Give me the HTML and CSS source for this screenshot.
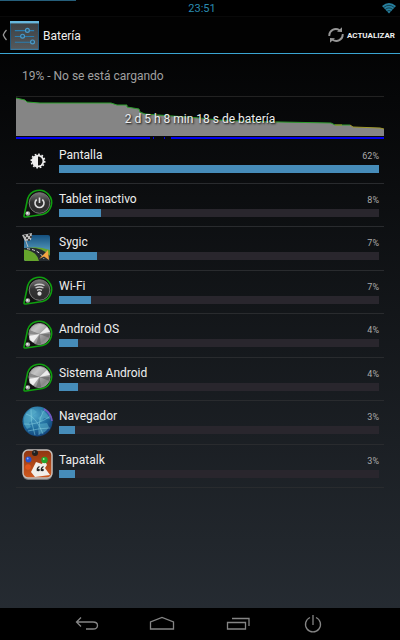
FILE: index.html
```html
<!DOCTYPE html>
<html lang="es">
<head>
<meta charset="utf-8">
<title>Batería</title>
<meta name="viewport" content="width=device-width, initial-scale=1">
<link rel="stylesheet" href="styles.css">
</head>
<body>
<svg class="defs" aria-hidden="true">
  <defs>
    <linearGradient id="dark" x1="0" y1="0" x2="0" y2="1"><stop offset="0" stop-color="#777"/><stop offset=".45" stop-color="#333"/><stop offset="1" stop-color="#2b2b2b"/></linearGradient>
    <linearGradient id="metal" x1="0" y1="0" x2="1" y2="1"><stop offset="0" stop-color="#999"/><stop offset=".3" stop-color="#c4c4c4"/><stop offset=".5" stop-color="#aaa"/><stop offset=".75" stop-color="#888"/><stop offset="1" stop-color="#b5b5b5"/></linearGradient>
    <linearGradient id="sky" x1="0" y1="0" x2="0" y2="1"><stop offset="0" stop-color="#14507f"/><stop offset="1" stop-color="#7cc4e0"/></linearGradient>
    <radialGradient id="globe" cx=".4" cy=".3" r=".75"><stop offset="0" stop-color="#4fa5c8"/><stop offset=".6" stop-color="#1f6c9d"/><stop offset="1" stop-color="#123d75"/></radialGradient>
    <linearGradient id="wood" x1="0" y1="0" x2="0" y2="1"><stop offset="0" stop-color="#8e3510"/><stop offset="1" stop-color="#d05a20"/></linearGradient>
    <linearGradient id="tile" x1="0" y1="0" x2="0" y2="1"><stop offset="0" stop-color="#3b3f42"/><stop offset="1" stop-color="#55595c"/></linearGradient>
    <g id="drop">
      <path d="M2 28L5.700 10.500A12.300 12.300 0 1 1 20.500 26.500L4 29Q1.800 29.300 2 28Z" fill="#111" stroke="#10a010" stroke-width="1.600"/>
      <circle cx="5.800" cy="25.500" r="2.300" fill="#aaa"/><circle cx="5.300" cy="25" r="1" fill="#eee"/>
    </g>
    <g id="disc">
      <circle cx="17.500" cy="15" r="10.500" fill="url(#metal)" stroke="#999"/>
      <path d="M17.500 15L7.500 17V21L11 23.500ZM17.500 15L25 8L28 13Z" fill="#fff" opacity=".8"/>
      <path d="M17.500 15L7.500 11L7.300 15.500ZM17.500 15L27.500 19L27.700 15ZM17.500 15L14 25L19 25.300Z" fill="#555" opacity=".5"/>
    </g>
  </defs>
</svg>

<header class="status">
  <span class="clock">23:51</span>
  <svg class="signal" viewBox="0 0 14 11" aria-hidden="true"><path d="M0 3Q7-3 14 3L7 10.500Z" fill="#27809f"/><path d="M1.500 4.600Q7 0 12.500 4.600M3.200 6.500Q7 3.300 10.800 6.500M5 8.300Q7 6.600 9 8.300" fill="none" stroke="#000" stroke-width=".5"/></svg>
</header>

<nav class="bar">
  <a class="up" href="#" aria-label="Volver a Ajustes">
    <svg class="chevron" viewBox="0 0 6 12" aria-hidden="true"><path d="M4.500 1Q2.500 3 1.300 6Q2.500 9 4.500 11" fill="none" stroke="#999" stroke-width="1.300"/></svg>
    <svg class="settings" viewBox="0 0 30 30" aria-hidden="true">
      <rect x=".5" y=".5" width="29" height="29" fill="url(#tile)" stroke="#235b80"/>
      <path d="M0 0H30V2.500H0Z" fill="#67b7dd"/><path d="M1 29.300H29" stroke="#3d81aa"/>
      <path d="M5 10H25M5 16H25M5 22H25" stroke="#2a7db0" stroke-width="1.200"/>
      <g fill="#2d546c" stroke="#4a9ccc" stroke-width="1.200"><circle cx="18" cy="9.700" r="2"/><circle cx="13" cy="15.700" r="2"/><circle cx="23.300" cy="21.700" r="2"/></g>
    </svg>
  </a>
  <h1>Batería</h1>
  <button class="refresh" type="button">
    <svg viewBox="0 0 16 16" aria-hidden="true"><g fill="none" stroke="#969696" stroke-width="1.900"><path d="M1.300 9A6.500 6.500 0 0 1 11.500 3.200"/><path d="M14.700 7A6.500 6.500 0 0 1 4.500 12.800"/></g><path d="M9 4.800L14 5V.300ZM7 11.200L2 11V15.700Z" fill="#969696"/></svg>
    ACTUALIZAR
  </button>
</nav>

<main>
  <p class="state">19% - No se está cargando</p>
  <section class="history">
    <svg viewBox="0 0 368 43" preserveAspectRatio="none" aria-hidden="true">
      <path d="M0 1L9 3L11 5L24 6L95 6L101 8H111V10L123 12L124 15L129 17L184 21L202 23L224 24L264 25L315 26L319 28L334 28L337 30L364 31L368 32V39H0Z" fill="#858585"/>
      <path d="M0 1L9 3L11 5L24 6L95 6L101 8H111V10L123 12L124 15L129 17L184 21L202 23L224 24L264 25L315 26L319 28H334" fill="none" stroke="#2c9e2c"/>
      <path d="M334 28L337 30L364 31L368 32M319 28H326" fill="none" stroke="#a09a28"/>
      <path d="M0 41H134M137 41H138M148 41H149M155 41H368" stroke="#0000f0" stroke-width="2"/>
    </svg>
    <p>2 d 5 h 8 min 18 s de batería</p>
  </section>

  <ul class="usage">
    <li>
      <svg class="icon" viewBox="0 0 32 32" aria-hidden="true"><circle cx="16" cy="16" r="6.300" fill="#eee"/><circle cx="16" cy="16" r="6.700" fill="none" stroke="#eee" stroke-width="1.600" stroke-dasharray="1.750 1.750"/><path d="M16 11.500A4.500 4.500 0 0 1 16 20.500Z" fill="#111"/></svg>
      <span class="name">Pantalla</span><span class="pct">62%</span><div class="track"><div class="fill" style="width:100%"></div></div>
    </li>
    <li>
      <svg class="icon" viewBox="0 0 32 32" aria-hidden="true"><use href="#drop"/><circle cx="17.500" cy="15" r="10.300" fill="url(#dark)" stroke="#777"/><path d="M14.700 11.500A4.500 4.500 0 1 0 20.300 11.500M17.500 9.500V15" fill="none" stroke="#ddd" stroke-width="1.600"/></svg>
      <span class="name">Tablet inactivo</span><span class="pct">8%</span><div class="track"><div class="fill" style="width:13%"></div></div>
    </li>
    <li>
      <svg class="icon" viewBox="0 0 32 32" aria-hidden="true"><rect x="2" y="3" width="26" height="26" rx="2" fill="url(#sky)"/><path d="M2 17Q14 13 28 18V27Q28 29 26 29H4Q2 29 2 27Z" fill="#65a52c"/><path d="M2 16Q20 14 28 24V29H17Q15 19 2 17.500Z" fill="#252b30"/><path d="M5 16.700Q18 18 22 27" fill="none" stroke="#ddd" stroke-dasharray="3 2"/><path d="M17 27L26 18L27 28L22 24.500Z" fill="#f4a443"/><path d="M0 3L10 1L9 8L3 9Z" fill="#bbb"/><path d="M2 3H4V5H2ZM6 2H8V4H6ZM4 5H6V7H4ZM8 4H10V6H8ZM6 7H8V9H6Z" fill="#444"/><path d="M2 4L6 15" stroke="#bbb"/></svg>
      <span class="name">Sygic</span><span class="pct">7%</span><div class="track"><div class="fill" style="width:12%"></div></div>
    </li>
    <li>
      <svg class="icon" viewBox="0 0 32 32" aria-hidden="true"><use href="#drop"/><circle cx="17.500" cy="15" r="10.300" fill="url(#dark)" stroke="#777"/><path d="M12.500 10.500Q17.500 8 22.500 10.500M13.500 13Q17.500 11 21.500 13M15 15.300Q17.500 14 20 15.300" fill="none" stroke="#ccc" stroke-width="1.300"/><circle cx="17.500" cy="18.700" r="2.100" fill="#ddd"/></svg>
      <span class="name">Wi-Fi</span><span class="pct">7%</span><div class="track"><div class="fill" style="width:10%"></div></div>
    </li>
    <li>
      <svg class="icon" viewBox="0 0 32 32" aria-hidden="true"><use href="#drop"/><use href="#disc"/></svg>
      <span class="name">Android OS</span><span class="pct">4%</span><div class="track"><div class="fill" style="width:6%"></div></div>
    </li>
    <li>
      <svg class="icon" viewBox="0 0 32 32" aria-hidden="true"><use href="#drop"/><use href="#disc"/></svg>
      <span class="name">Sistema Android</span><span class="pct">4%</span><div class="track"><div class="fill" style="width:6%"></div></div>
    </li>
    <li>
      <svg class="icon" viewBox="0 0 32 32" aria-hidden="true"><circle cx="15.500" cy="15.500" r="15" fill="url(#globe)"/><path d="M2 12Q4 5 11 3L15 6L11 9L12 13L7 17L9 21L5 23Q1 18 2 12ZM19 4Q25 6 28 13L22 12L19 16L16 12L20 9ZM17 18L25 17L27 21Q23 28 17 28L18 23Z" fill="#5bb2cc" opacity=".55"/><path d="M4 8Q14 10 21 28M9 3Q8 15 13 29M2 18Q14 20 29 10M6 25Q18 22 28 22M24 3Q16 9 17 29" fill="none" stroke="#8bd5e4" stroke-width=".7" opacity=".7"/><path d="M22 3Q29 7 30 15" fill="none" stroke="#7657c0" stroke-width="1.700"/></svg>
      <span class="name">Navegador</span><span class="pct">3%</span><div class="track"><div class="fill" style="width:5%"></div></div>
    </li>
    <li>
      <svg class="icon" viewBox="0 0 32 32" aria-hidden="true"><rect x="1" y="1" width="29" height="30" rx="5" fill="#777"/><rect x="1" y="1" width="29" height="28" rx="5" fill="url(#wood)" stroke="#c5bfba" stroke-width="1.500"/><path d="M14 13L20 15L22 10L25 16L23 19L28 26L13 28L9 23Z" fill="#f2efea"/><g fill="none" stroke="#222" stroke-width="1.300"><path d="M17.500 17.500Q14.500 19 15.500 22M21.500 17.500Q18.500 19 19.500 22"/></g><circle cx="16.500" cy="21" r="1.300" fill="#222"/><circle cx="20.500" cy="21" r="1.300" fill="#222"/><circle cx="13" cy="4" r="3" fill="#222"/><circle cx="12.300" cy="3" r=".8" fill="#888"/><circle cx="6.500" cy="10.500" r="3" fill="#2452cf"/><circle cx="5.700" cy="9.500" r=".9" fill="#8db0ff"/><circle cx="22.500" cy="11" r="3.200" fill="#26a62c"/><circle cx="21.700" cy="10" r=".9" fill="#9cf09c"/><circle cx="6" cy="18" r="2.800" fill="#e0551e"/></svg>
      <span class="name">Tapatalk</span><span class="pct">3%</span><div class="track"><div class="fill" style="width:5%"></div></div>
    </li>
  </ul>
</main>

<footer class="keys">
  <button type="button" aria-label="Atrás"><svg viewBox="0 0 26 18"><path d="M7 2.500L2.500 7L7 11.500M2.500 7H19Q23.500 7 23.500 10.500Q23.500 14 19 14H12" /></svg></button>
  <button type="button" aria-label="Inicio"><svg viewBox="0 0 26 18"><path d="M1.500 14V7L13 2.500L24.500 7V14Z"/></svg></button>
  <button type="button" aria-label="Recientes"><svg viewBox="0 0 26 18"><path d="M2.500 7.500H20.500V14H2.500ZM7 3.500H24V11"/></svg></button>
  <button type="button" aria-label="Apagar"><svg viewBox="0 0 26 18"><path d="M10 2.500A7.500 7.500 0 1 0 16 2.500M13 0V10"/></svg></button>
</footer>
</body>
</html>
```

FILE: styles.css
```css
* {
  box-sizing: border-box;
}

body {
  margin: 0;
  min-height: 100vh;
  display: flex;
  flex-direction: column;
  font-family: Roboto, "Liberation Sans", sans-serif;
  color: #eee;
  background: linear-gradient(#000, #272d34);
}

h1, p, ul {
  margin: 0;
  padding: 0;
  font-weight: 400;
}

svg {
  display: block;
}

button {
  padding: 0;
  border: 0;
  background: none;
  color: inherit;
  font-family: inherit;
}

.defs {
  position: absolute;
  width: 0;
  height: 0;
}

.status {
  display: grid;
  grid-template-columns: 1fr auto 1fr;
  align-items: end;
  height: 17px;
  padding: 0 4px 0 8px;
  background: linear-gradient(90deg, #255e7a, #255e7a) 0 0 / 19% 1px no-repeat #000;
  border-bottom: 1px solid #090909;
}

.clock {
  grid-column: 2;
  font-size: 11px;
  line-height: 14px;
  color: #2a8bb0;
}

.signal {
  justify-self: end;
  align-self: center;
  width: 14px;
  height: 11px;
}

.bar {
  display: flex;
  align-items: center;
  height: 37px;
  padding: 0 5px 0 2px;
  background: #020202;
  border-bottom: 1px solid #3aa5d2;
}

.up {
  display: flex;
  align-items: center;
  gap: 2px;
}

.chevron {
  width: 6px;
  height: 12px;
}

.settings {
  width: 29px;
  height: 29px;
}

h1 {
  flex: 1;
  margin-left: 4px;
  font-size: 12px;
  line-height: 18px;
  padding-top: 1px;
}

.refresh {
  display: flex;
  align-items: center;
  gap: 3px;
  font-size: 8px;
  font-weight: 700;
}

.refresh svg {
  width: 16px;
  height: 16px;
}

main {
  flex: 1;
  padding: 0 16px;
}

.state {
  padding: 2px 6px 0;
  font-size: 12px;
  line-height: 40px;
  color: #a0a0a0;
  border-bottom: 1px solid #222;
}

.history {
  display: grid;
  align-items: center;
}

.history > * {
  grid-area: 1 / 1;
}

.history svg {
  width: 100%;
  height: 43px;
}

.history p {
  font-size: 12px;
  line-height: 16px;
  text-align: center;
  text-shadow: 1px 1px 2px #000;
}

.usage {
  display: grid;
  grid-auto-rows: 1fr;
  height: 348px;
  list-style: none;
}

.usage li {
  display: grid;
  grid-template-columns: 32px 1fr auto;
  grid-template-rows: 16px 8px;
  column-gap: 5px;
  row-gap: 1px;
  align-content: center;
  padding: 0 5px 1px 6px;
  border-bottom: 1px solid #292b2e;
}

.icon {
  grid-row: 1 / 3;
  align-self: center;
  width: 32px;
  height: 32px;
  margin: -4px 0;
}

.name {
  font-size: 12px;
  line-height: 14px;
}

.pct {
  font-size: 9px;
  line-height: 16px;
  color: #aaa;
}

.track {
  grid-column: 2 / 4;
  height: 8px;
  background: #29262d;
}

.fill {
  height: 100%;
  background: #468cb9;
}

.keys {
  display: grid;
  grid-template-columns: repeat(4, 1fr);
  align-items: center;
  height: 32px;
  padding: 0 49px;
  background: #000;
}

.keys button {
  display: grid;
  justify-items: center;
}

.keys svg {
  width: 26px;
  height: 18px;
  fill: none;
  stroke: #858585;
  stroke-width: 1.3px;
}
```
